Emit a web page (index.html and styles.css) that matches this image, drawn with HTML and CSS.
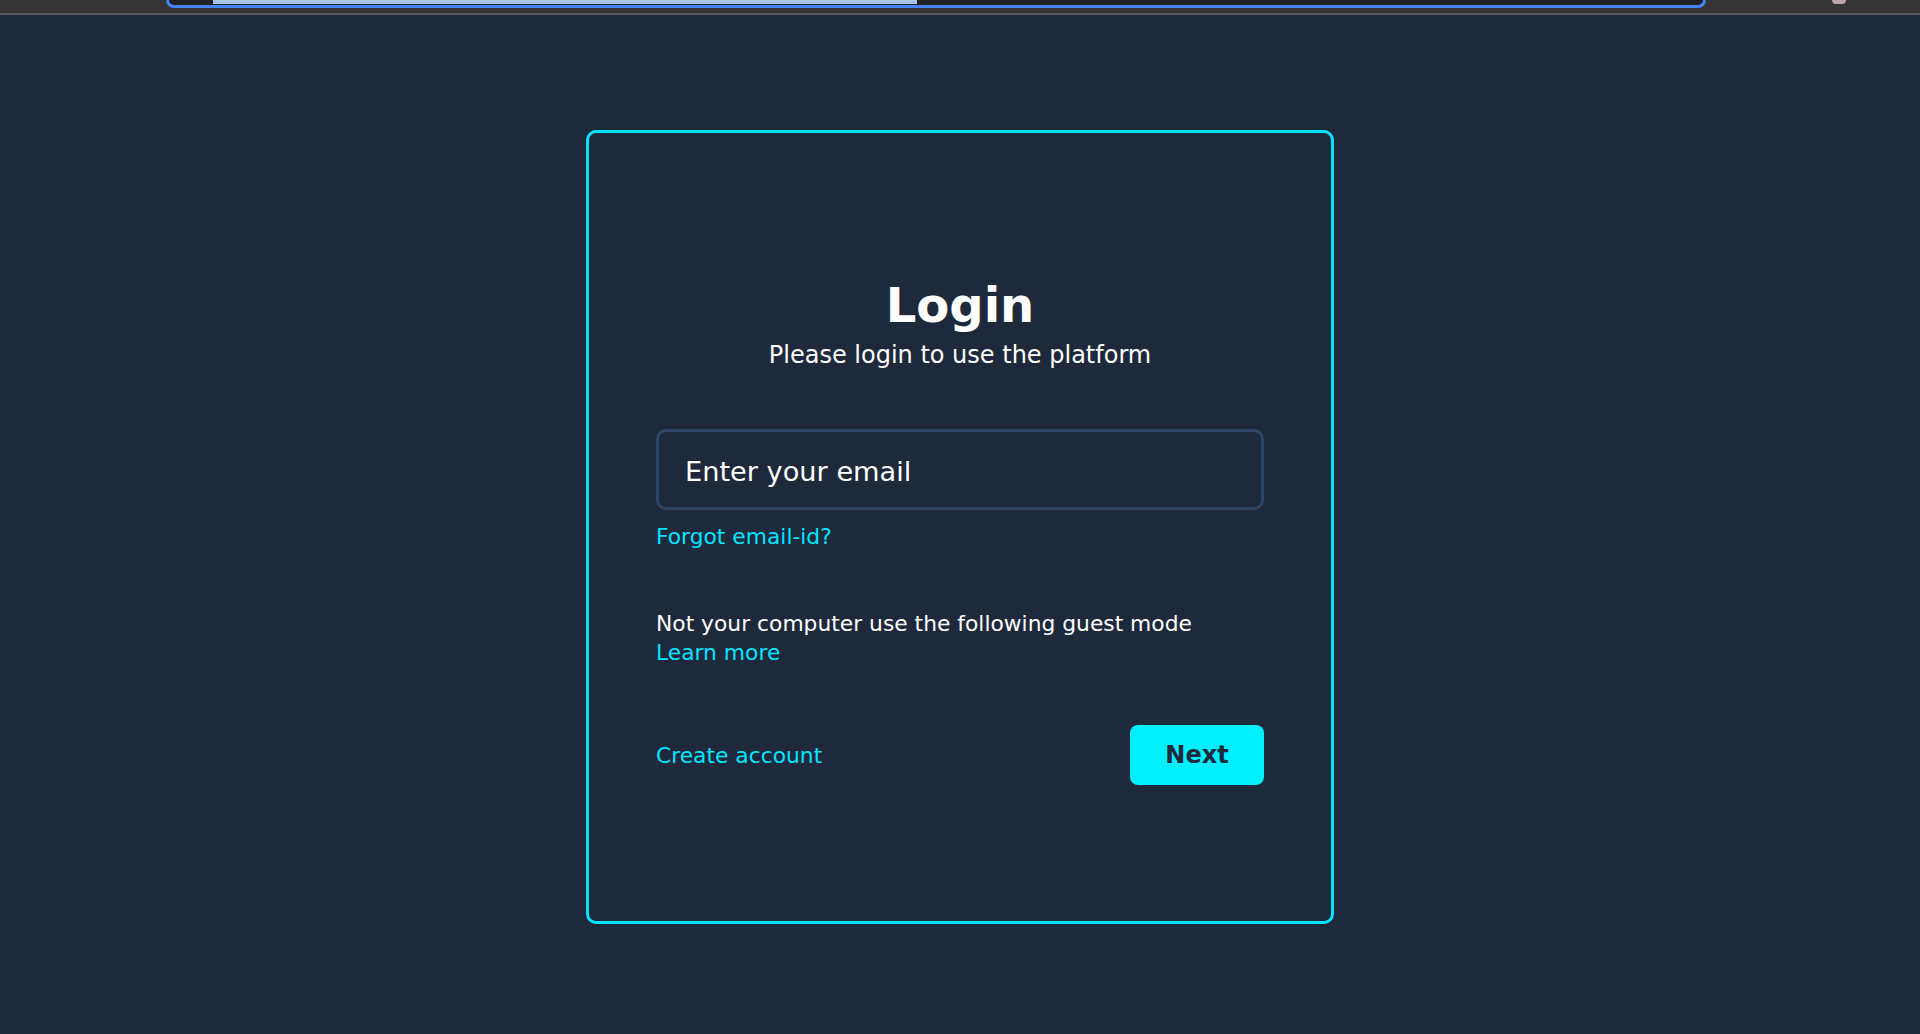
FILE: index.html
```html
<!DOCTYPE html>
<html lang="en">
<head>
<meta charset="utf-8">
<title>Login</title>
<link rel="stylesheet" href="styles.css">
</head>
<body>
<div class="chrome">
  <div class="omnibox"><div class="progress"></div></div>
  <div class="chrome-icon"></div>
</div>
<main class="page">
  <section class="card">
    <h1 class="title">Login</h1>
    <p class="subtitle">Please login to use the platform</p>
    <input class="email" type="email" placeholder="Enter your email">
    <a class="link forgot" href="#">Forgot email-id?</a>
    <div class="guest">
      <div class="guest-text">Not your computer use the following guest mode</div>
      <a class="link" href="#">Learn more</a>
    </div>
    <div class="actions">
      <a class="link" href="#">Create account</a>
      <button class="next" type="button">Next</button>
    </div>
  </section>
</main>
</body>
</html>
```

FILE: styles.css
```css
* { box-sizing: border-box; }

html, body {
  margin: 0;
  padding: 0;
  background: #1e293b;
  font-family: "DejaVu Sans", Verdana, sans-serif;
  color: #ffffff;
}

.chrome {
  height: 15px;
  background: #353535;
  border-bottom: 2px solid #5c5c5c;
  display: flex;
  align-items: flex-start;
}

.omnibox {
  margin-left: 166px;
  width: 1540px;
  height: 8px;
  background: #202124;
  border: 3px solid #4285f4;
  border-top: none;
  border-radius: 0 0 16px 16px;
}

.progress {
  margin-left: 44px;
  width: 704px;
  height: 4px;
  background: #a8c7fa;
}

.chrome-icon {
  margin-left: 126px;
  width: 14px;
  height: 4px;
  border-radius: 0 0 7px 7px;
  background: #b9a3ad;
}

.page {
  padding-top: 115px;
  display: flex;
  justify-content: center;
}

.card {
  width: 748px;
  height: 794px;
  border: 3px solid #00e5ff;
  border-radius: 10px;
  padding: 144px 67px 0;
  display: flex;
  flex-direction: column;
}

.title {
  margin: 0;
  font-size: 48px;
  line-height: 56px;
  font-weight: 700;
  text-align: center;
  color: #ffffff;
}

.subtitle {
  margin: 6px 0 0;
  font-size: 24px;
  line-height: 32px;
  text-align: center;
}

.email {
  margin-top: 58px;
  width: 100%;
  height: 81px;
  border: 3px solid #2c4565;
  border-radius: 10px;
  background: transparent;
  padding: 3px 26px 0;
  font-family: "DejaVu Sans", Verdana, sans-serif;
  font-size: 27.2px;
  color: #ffffff;
  outline: none;
}

.email::placeholder {
  color: #ffffff;
  opacity: 1;
}

.link {
  color: #00e5ff;
  text-decoration: none;
  font-size: 21.8px;
  line-height: 29px;
}

.forgot {
  margin-top: 12px;
  align-self: flex-start;
}

.guest {
  margin-top: 58px;
  display: flex;
  flex-direction: column;
  align-items: flex-start;
}

.guest-text {
  font-size: 21.8px;
  line-height: 29px;
}

.actions {
  margin-top: 58px;
  display: flex;
  justify-content: space-between;
  align-items: center;
}

.next {
  width: 134px;
  height: 60px;
  border: none;
  border-radius: 8px;
  background: #00efff;
  color: #1e293b;
  font-family: "DejaVu Sans", Verdana, sans-serif;
  font-size: 24px;
  font-weight: 700;
  cursor: pointer;
}
```
